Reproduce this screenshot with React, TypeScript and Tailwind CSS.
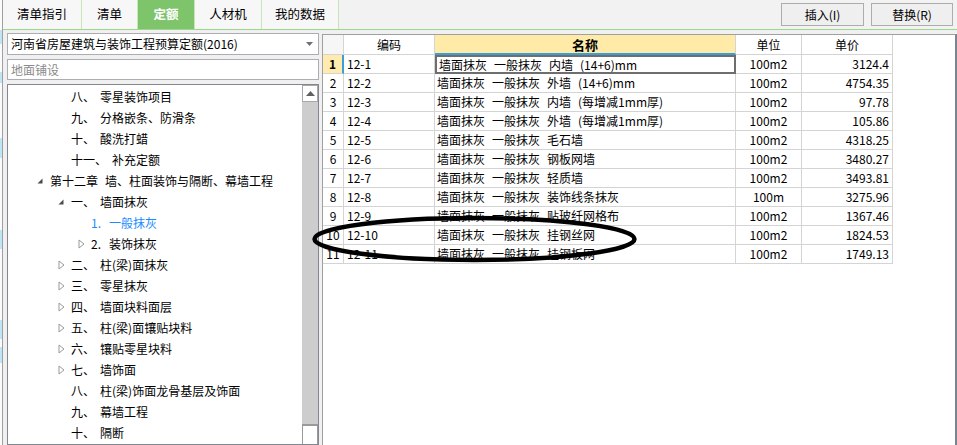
import React from "react";

type Row = { n: number; code: string; name: string[]; unit: string; price: string };

const rows: Row[] = [
  { n: 1, code: "12-1", name: ["墙面抹灰", "一般抹灰", "内墙", "(14+6)mm"], unit: "100m2", price: "3124.4" },
  { n: 2, code: "12-2", name: ["墙面抹灰", "一般抹灰", "外墙", "(14+6)mm"], unit: "100m2", price: "4754.35" },
  { n: 3, code: "12-3", name: ["墙面抹灰", "一般抹灰", "内墙", "(每增减1mm厚)"], unit: "100m2", price: "97.78" },
  { n: 4, code: "12-4", name: ["墙面抹灰", "一般抹灰", "外墙", "(每增减1mm厚)"], unit: "100m2", price: "105.86" },
  { n: 5, code: "12-5", name: ["墙面抹灰", "一般抹灰", "毛石墙"], unit: "100m2", price: "4318.25" },
  { n: 6, code: "12-6", name: ["墙面抹灰", "一般抹灰", "钢板网墙"], unit: "100m2", price: "3480.27" },
  { n: 7, code: "12-7", name: ["墙面抹灰", "一般抹灰", "轻质墙"], unit: "100m2", price: "3493.81" },
  { n: 8, code: "12-8", name: ["墙面抹灰", "一般抹灰", "装饰线条抹灰"], unit: "100m", price: "3275.96" },
  { n: 9, code: "12-9", name: ["墙面抹灰", "一般抹灰", "贴玻纤网格布"], unit: "100m2", price: "1367.46" },
  { n: 10, code: "12-10", name: ["墙面抹灰", "一般抹灰", "挂钢丝网"], unit: "100m2", price: "1824.53" },
  { n: 11, code: "12-11", name: ["墙面抹灰", "一般抹灰", "挂钢板网"], unit: "100m2", price: "1749.13" },
];

type TreeItem = {
  level: 0 | 1 | 2;
  icon: "none" | "open" | "closed";
  prefix: string;
  label: string;
  blue?: boolean;
};

const tree: TreeItem[] = [
  { level: 1, icon: "none", prefix: "八、", label: "零星装饰项目" },
  { level: 1, icon: "none", prefix: "九、", label: "分格嵌条、防滑条" },
  { level: 1, icon: "none", prefix: "十、", label: "酸洗打蜡" },
  { level: 1, icon: "none", prefix: "十一、", label: "补充定额" },
  { level: 0, icon: "open", prefix: "第十二章", label: "墙、柱面装饰与隔断、幕墙工程" },
  { level: 1, icon: "open", prefix: "一、", label: "墙面抹灰" },
  { level: 2, icon: "none", prefix: "1.", label: "一般抹灰", blue: true },
  { level: 2, icon: "closed", prefix: "2.", label: "装饰抹灰" },
  { level: 1, icon: "closed", prefix: "二、", label: "柱(梁)面抹灰" },
  { level: 1, icon: "closed", prefix: "三、", label: "零星抹灰" },
  { level: 1, icon: "closed", prefix: "四、", label: "墙面块料面层" },
  { level: 1, icon: "closed", prefix: "五、", label: "柱(梁)面镶贴块料" },
  { level: 1, icon: "closed", prefix: "六、", label: "镶贴零星块料" },
  { level: 1, icon: "closed", prefix: "七、", label: "墙饰面" },
  { level: 1, icon: "none", prefix: "八、", label: "柱(梁)饰面龙骨基层及饰面" },
  { level: 1, icon: "none", prefix: "九、", label: "幕墙工程" },
  { level: 1, icon: "none", prefix: "十、", label: "隔断" },
];

const strip: [number, boolean][] = [
  [30, false], [14, true], [28, false], [11, true], [55, false], [20, true],
  [72, false], [19, true], [71, false], [19, true], [8, false], [16, true], [80, false],
];

function TreeIcon({ kind }: { kind: TreeItem["icon"] }) {
  if (kind === "open")
    return (
      <svg width="6" height="6" viewBox="0 0 6 6" className="ml-[1px] mt-[1px]">
        <polygon points="5.5,0.5 5.5,5.5 0.5,5.5" fill="#4a4a4a" />
      </svg>
    );
  if (kind === "closed")
    return (
      <svg width="7" height="10" viewBox="0 0 7 10" className="ml-[1px]">
        <polygon points="1,1 6,5 1,9" fill="white" stroke="#9a9a9a" strokeWidth="1" />
      </svg>
    );
  return null;
}

export default function App() {
  return (
    <div className="relative flex w-[957px] h-[445px] overflow-hidden bg-[#f0f0f0] text-black font-['Noto_Sans_CJK_SC',sans-serif] text-[12px] leading-none">
      {/* left peek strip */}
      <div className="w-[3px] h-full flex flex-col border-r border-[#a0a0a0] bg-[#fbfbfb]">
        {strip.map(([h, b], i) => (
          <div key={i} className={b ? "bg-[#bfe6f7]" : "bg-[#fbfbfb]"} style={{ height: h }} />
        ))}
      </div>

      <div className="flex-1 flex flex-col min-w-0">
        {/* top bar */}
        <div className="h-[30px] flex border-b border-[#9fd68f] bg-[#f2f2f2] shrink-0">
          <div className="w-[79px] flex items-center justify-center border-r border-[#c6e6ba] bg-[#f7f7f7] text-[12.5px]">清单指引</div>
          <div className="w-[56px] flex items-center justify-center border-r border-[#c6e6ba] bg-[#f7f7f7] text-[12.5px]">清单</div>
          <div className="w-[57px] flex items-center justify-center border-r border-[#c6e6ba] bg-[#7dc46b] text-white font-bold text-[12.5px]">定额</div>
          <div className="w-[67px] flex items-center justify-center border-r border-[#c6e6ba] bg-[#f7f7f7] text-[12.5px]">人材机</div>
          <div className="w-[77px] flex items-center justify-center border-r border-[#c6e6ba] bg-[#f7f7f7] text-[12.5px]">我的数据</div>
          <div className="flex-1" />
          <div className="flex gap-[7px] pt-[3px] pr-[4px]">
            <div className="w-[83px] h-[23px] flex items-center justify-center border border-[#adadad] bg-[#efefef]">插入(I)</div>
            <div className="w-[82px] h-[23px] flex items-center justify-center border border-[#adadad] bg-[#efefef]">替换(R)</div>
          </div>
        </div>

        {/* body */}
        <div className="flex-1 flex min-h-0">
          {/* left panel */}
          <div className="w-[317px] flex flex-col pl-[4px] pr-[1px] pt-[3px] gap-[4px]">
            <div className="h-[22px] flex items-center border border-[#abadb3] bg-white pl-[3px] pr-[5px]">
              <span className="flex-1">河南省房屋建筑与装饰工程预算定额(2016)</span>
              <svg width="7" height="4" viewBox="0 0 7 4">
                <polygon points="0,0 7,0 3.5,4" fill="#707070" />
              </svg>
            </div>
            <div className="h-[21px] flex items-center border border-[#abadb3] bg-white pl-[3px] text-[#8a8a8a]">地面铺设</div>
            <div className="flex-1 flex border border-[#828790] bg-white min-h-0">
              <div className="flex-1 pt-[1px]">
                {tree.map((t, i) => {
                  const pl = t.level === 0 ? 28 : t.level === 1 ? 49 : 69;
                  return (
                    <div key={i} className="h-[21px] flex items-center" style={{ paddingLeft: pl }}>
                      <div className="w-[14px] flex items-center">
                        <TreeIcon kind={t.icon} />
                      </div>
                      <span className={t.blue ? "text-[#1a8cff]" : ""}>{t.prefix}</span>
                      <span className={(t.blue ? "text-[#1a8cff] " : "") + (t.level === 0 ? "ml-[7px]" : t.level === 2 ? "ml-[8px]" : "ml-[5px]")}>
                        {t.label}
                      </span>
                    </div>
                  );
                })}
              </div>
              <div className="w-[16px] flex flex-col bg-[#cdcdcd]">
                <div className="h-[17px] bg-white border border-[#a8a8a8] flex items-center justify-center">
                  <svg width="9" height="5" viewBox="0 0 9 5">
                    <polygon points="0,5 9,5 4.5,0" fill="#606060" />
                  </svg>
                </div>
                <div className="flex-1" />
                <div className="h-[20px] bg-white border-t-[2px] border-x border-[#9a9a9a]" />
              </div>
            </div>
          </div>

          {/* right panel */}
          <div className="flex-1 pl-[2px] pt-[4px] flex">
            <div className="flex-1 border-l border-t border-[#a0a0a0] border-r-[2px] border-r-[#7a8590] bg-white">
              {/* header */}
              <div className="flex h-[20px]">
                <div className="w-[21px] border-r border-b border-[#d4d4d4] bg-[#f6f6f6]" />
                <div className="w-[91px] flex items-center justify-center border-r border-b border-[#d4d4d4]">编码</div>
                <div className="w-[301px] flex items-center justify-center border-r border-[#d4d4d4] border-b-[2px] border-b-[#3a9fd5] bg-[#ffeaa8] font-bold text-[13px]">名称</div>
                <div className="w-[66px] flex items-center justify-center border-r border-b border-[#d4d4d4]">单位</div>
                <div className="w-[91px] flex items-center justify-center border-r border-b border-[#d4d4d4]">单价</div>
              </div>
              {rows.map((r) => {
                const sel = r.n === 1;
                return (
                  <div key={r.n} className="flex h-[19px]">
                    <div
                      className={
                        "w-[21px] flex items-center justify-center border-b border-[#d4d4d4] " +
                        (sel ? "bg-[#ffeab0] font-bold border-r-[2px] border-r-[#3a9fd5]" : "border-r")
                      }
                    >
                      {r.n}
                    </div>
                    <div className="w-[91px] flex items-center pl-[3px] border-r border-b border-[#d4d4d4]">{r.code}</div>
                    <div
                      className={
                        "w-[301px] flex items-center pl-[2px] gap-[7px] " +
                        (sel ? "border-[2px] border-[#6e6e6e]" : "border-r border-b border-[#d4d4d4]")
                      }
                    >
                      {r.name.map((p, i) => (
                        <span key={i}>{p}</span>
                      ))}
                    </div>
                    <div className="w-[66px] flex items-center justify-center border-r border-b border-[#d4d4d4]">{r.unit}</div>
                    <div className="w-[91px] flex items-center justify-end pr-[3px] border-r border-b border-[#d4d4d4]">{r.price}</div>
                  </div>
                );
              })}
            </div>
          </div>
        </div>
      </div>

      {/* hand-drawn ellipse annotation */}
      <svg className="absolute left-0 top-0 pointer-events-none" width="957" height="445" viewBox="0 0 957 445">
        <ellipse cx="474.5" cy="239" rx="160" ry="21" fill="none" stroke="#000" strokeWidth="4.5" />
      </svg>
    </div>
  );
}
